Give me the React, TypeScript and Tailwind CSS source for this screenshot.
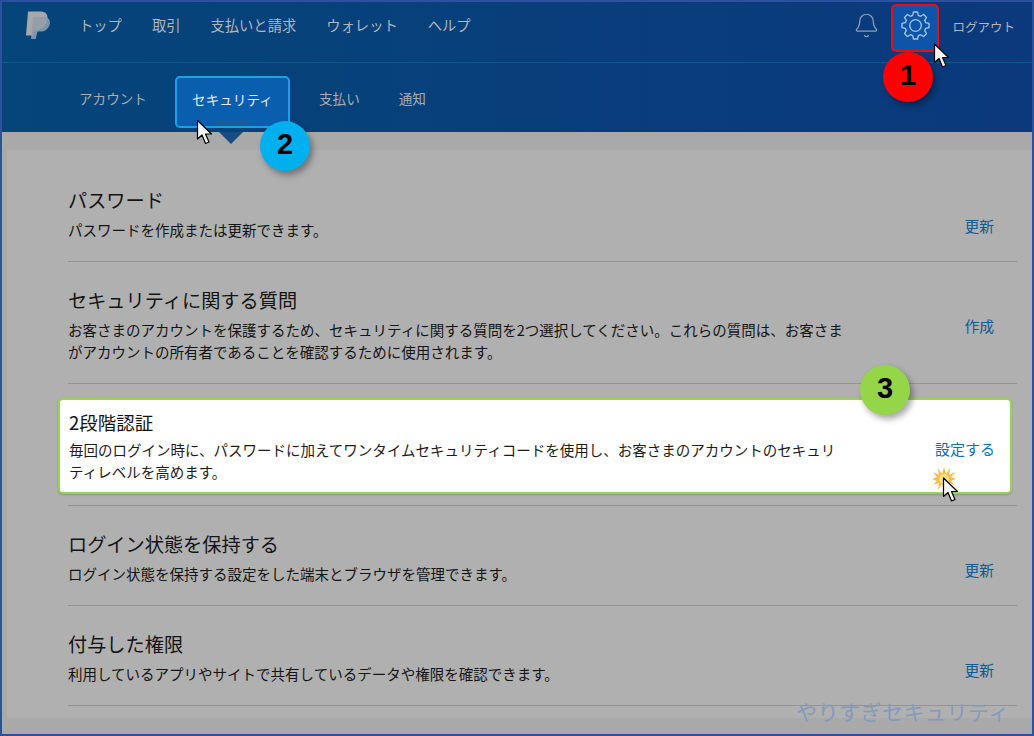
import React from 'react';
import { Bell } from 'lucide-react';

const jp = { fontFamily: '"Noto Sans CJK JP", "Noto Sans", sans-serif' };

function gearPath() {
  const pts: string[] = [];
  for (let i = 0; i < 8; i++) {
    const a = (i * 45 - 90) * (Math.PI / 180);
    const spots: [number, number][] = [
      [10.2, -0.27],
      [13.2, -0.15],
      [13.2, 0.15],
      [10.2, 0.27],
    ];
    spots.forEach(([r, d]) => {
      pts.push(`${(14 + r * Math.cos(a + d)).toFixed(2)} ${(14 + r * Math.sin(a + d)).toFixed(2)}`);
    });
  }
  return `M${pts.join(' L')} Z`;
}

function Cursor({ className }: { className: string }) {
  return (
    <svg viewBox="0 0 18 26" className={className}>
      <path
        d="M1.5 1 L1.5 19.5 L6 15.5 L9.5 24 L13 22.5 L9.5 14.5 L15.5 14.5 Z"
        fill="#f4f4f4"
        stroke="#000"
        strokeWidth="1.2"
        strokeLinejoin="round"
      />
    </svg>
  );
}

function Badge({ n, className }: { n: number; className: string }) {
  return (
    <div
      className={`absolute flex h-[50px] w-[50px] items-center justify-center rounded-full pb-[3px] text-[29px] font-bold text-black shadow-[3px_4px_6px_rgba(0,0,0,0.35)] ${className}`}
      style={{ fontFamily: '"Liberation Sans", sans-serif' }}
    >
      {n}
    </div>
  );
}

function Row({
  title,
  lines,
  action,
  className,
}: {
  title: string;
  lines: string[];
  action: string;
  className: string;
}) {
  return (
    <div className={`flex items-start justify-between border-b border-[#949494] pr-[23px] ${className}`}>
      <div>
        <h2 className="text-[19.2px] leading-[26px] text-[#141414]">{title}</h2>
        <div className="mt-[5.5px] text-[14.5px] leading-[22px] text-[#141414]">
          {lines.map((l) => (
            <p key={l}>{l}</p>
          ))}
        </div>
      </div>
      <a className="mt-[28px] text-[14.8px] leading-[22px] text-[#11598f]">{action}</a>
    </div>
  );
}

export default function App() {
  return (
    <div className="relative h-[736px] w-[1034px] overflow-hidden border-2 border-[#2d50a0] bg-[#a9a9a9]" style={jp}>
      {/* header */}
      <header className="bg-linear-to-r from-[#05457a] to-[#0b397c]">
        <div className="flex h-[61px] items-center border-b border-[#0c5a8c] pb-[14px] pl-[24px] pr-[17px]">
          <svg viewBox="0 0 24 28" className="h-[28px] w-[24px]">
            <path d="M7 6 H19 C23 7 25 10 23.5 14 C22 18 19 20.5 15.5 20.5 H11.5 L9.7 28 H5 Z" fill="#7f95ac" />
            <path d="M2 0.5 H15 C20 0.5 22.5 4 21 9 C19.5 15 15 18.7 9.5 18.7 H8 L6.2 24.5 H0 Z" fill="#a8a8a8" />
            <path d="M7 6 H21.5 C20.5 12 15 18.7 9.5 18.7 H8 L6.2 24.5 H5.2 Z" fill="#959fa9" />
          </svg>
          <nav className="ml-[29px] flex gap-[30px] text-[14.3px] text-[#b2b6ba]">
            <span>トップ</span>
            <span>取引</span>
            <span>支払いと請求</span>
            <span>ウォレット</span>
            <span>ヘルプ</span>
          </nav>
          <div className="ml-auto flex items-center">
            <Bell size={27} strokeWidth={1.1} className="text-[#8d9fb3]" />
            <div className="ml-[11px] mt-[6px] flex h-[48px] w-[48px] items-center justify-center rounded-[5px] border-2 border-[#f00a14] bg-[#0e54a8] pb-[5px]">
              <svg viewBox="0 0 28 28" className="h-[29px] w-[29px]" fill="none" stroke="#a9c6e4" strokeWidth="1.25" strokeLinejoin="round">
                <path d={gearPath()} />
                <circle cx="14" cy="14" r="5.6" />
              </svg>
            </div>
            <span className="ml-[13px] mt-[4px] text-[12.5px] text-[#b2b6ba]">ログアウト</span>
          </div>
        </div>
        <div className="flex h-[69px] items-center pl-[77px] pt-[2px] text-[13.6px] text-[#a9aeb3]">
          <span>アカウント</span>
          <div className="relative ml-[28px] mt-[7px] flex h-[52px] w-[115px] items-center justify-center rounded-[5px] border-2 border-[#18a3e6] bg-[#0a5eae] pb-[6px] text-[#e2ebf3]">
            セキュリティ
            <div className="absolute bottom-0 left-[34px] h-0 w-[44px] border-x-[6px] border-b-[5px] border-x-transparent border-b-[#1c5a9c]" />
          </div>
          <span className="ml-[29px]">支払い</span>
          <span className="ml-[39px]">通知</span>
        </div>
      </header>

      {/* settings list */}
      <main className="mb-[15px] ml-[5px] mt-[18px] bg-[#b0b0b0] pl-[61px] pr-[15px]">
        <Row title="パスワード" lines={['パスワードを作成または更新できます。']} action="更新" className="h-[112px] pt-[37px]" />
        <Row
          title="セキュリティに関する質問"
          lines={[
            'お客さまのアカウントを保護するため、セキュリティに関する質問を2つ選択してください。これらの質問は、お客さま',
            'がアカウントの所有者であることを確認するために使用されます。',
          ]}
          action="作成"
          className="h-[122px] pt-[25px]"
        />
        <div className="h-[122px] border-b border-[#949494] pt-[14px]">
          <div className="-ml-[10px] flex h-[96px] w-[954px] items-start justify-between rounded-[5px] border-2 border-[#98d352] bg-white pl-[9px] pr-[15px] pt-[10px] shadow-[0_1px_2px_rgba(0,0,0,0.2)]">
            <div>
              <h2 className="text-[18.5px] leading-[24px] text-[#141414]">2段階認証</h2>
              <div className="mt-[5px] text-[14.5px] leading-[22px] text-[#1c1c1c]">
                <p>毎回のログイン時に、パスワードに加えてワンタイムセキュリティコードを使用し、お客さまのアカウントのセキュリ</p>
                <p>ティレベルを高めます。</p>
              </div>
            </div>
            <a className="mt-[28px] text-[15px] leading-[22px] text-[#0a70ba]">設定する</a>
          </div>
        </div>
        <Row title="ログイン状態を保持する" lines={['ログイン状態を保持する設定をした端末とブラウザを管理できます。']} action="更新" className="h-[100px] pt-[25px]" />
        <Row title="付与した権限" lines={['利用しているアプリやサイトで共有しているデータや権限を確認できます。']} action="更新" className="h-[100px] pt-[25px]" />
        <div className="h-[12px]" />
      </main>

      {/* annotations */}
      <div className="absolute left-[217px] top-[130px] h-0 w-0 border-x-[12px] border-t-[12px] border-x-transparent border-t-[#1a4b82]" />
      <Badge n={1} className="left-[881px] top-[50px] bg-[#ff0000]" />
      <Badge n={2} className="left-[258px] top-[119px] bg-[#00b0ee]" />
      <Badge n={3} className="left-[858px] top-[363px] bg-[#95d548]" />
      <Cursor className="absolute left-[931px] top-[41px] h-[26px] w-[18px]" />
      <Cursor className="absolute left-[194px] top-[117px] h-[27px] w-[18px]" />
      <svg viewBox="0 0 24 24" className="absolute left-[930px] top-[465px] h-[24px] w-[24px]">
        <polygon
          points="12,0 14,7 18,1 17,8 24,5 19,10 24,12 19,14 23,18 17,16 18,23 14,17 12,24 10,17 6,23 7,16 1,18 5,14 0,12 5,10 1,5 7,8 6,1 10,7"
          fill="#f8bd45"
        />
        <circle cx="12" cy="12" r="5" fill="#fbe08a" />
      </svg>
      <Cursor className="absolute left-[940px] top-[475px] h-[26px] w-[18px]" />
      <div className="absolute left-[794px] top-[694px] text-[21px] tracking-[0.5px] text-[#859abb]">やりすぎセキュリティ</div>
    </div>
  );
}
